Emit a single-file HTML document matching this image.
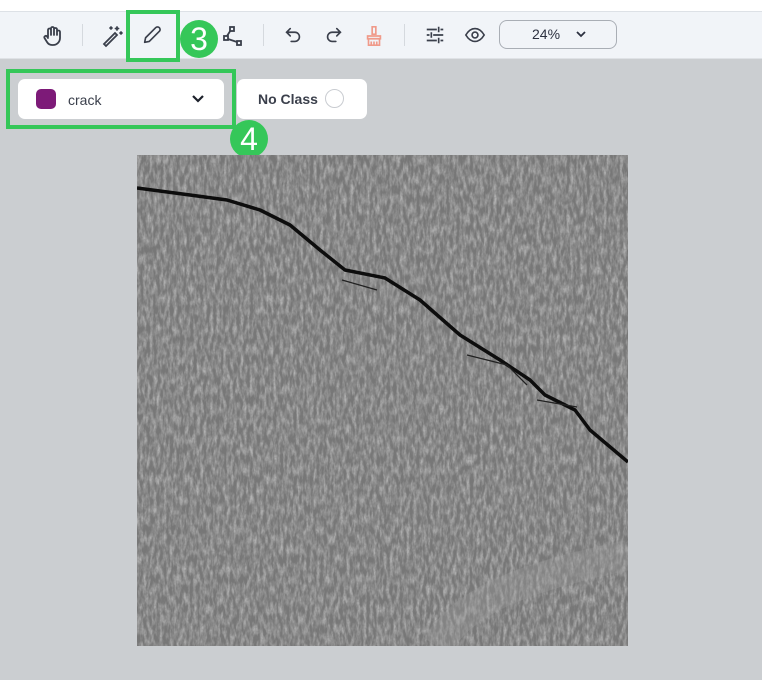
<!DOCTYPE html>
<html><head><style>
body{margin:0;width:762px;height:680px;background:#cbced1;font-family:"Liberation Sans",sans-serif;position:relative;overflow:hidden}
.top{position:absolute;left:0;top:0;width:762px;height:11px;background:#fff;border-bottom:1px solid #dde1e6}
.tb{position:absolute;left:0;top:12px;width:762px;height:46px;background:#f1f4f8;border-bottom:1px solid #dfe2e6}
.ab{position:absolute}
.sep{position:absolute;top:24px;width:1px;height:22px;background:#d5d9de}
.g{position:absolute;border:4px solid #35c759;box-sizing:border-box}
.num{position:absolute;width:36px;height:36px;border-radius:50%;background:#35c759;color:#fff;font-size:32px;line-height:36px;text-align:center}
.card{position:absolute;background:#fff;border-radius:7px}
</style></head><body>
<div class="top"></div>
<div class="tb"></div>
<svg class="ab" style="left:40px;top:24px" width="24" height="24" viewBox="0 0 24 24" fill="none" stroke="#3a3f4b" stroke-width="1.8" stroke-linecap="round" stroke-linejoin="round"><path d="M8 13V6a1.5 1.5 0 0 1 3 0v5M11 11V4.5a1.5 1.5 0 0 1 3 0V11M14 11V5.5a1.5 1.5 0 0 1 3 0V11M17 11V8a1.5 1.5 0 0 1 3 0v6a7 7 0 0 1-7 7h-1a6 6 0 0 1-5-3l-2.5-4a1.5 1.5 0 0 1 2.5-1.6L8 14"/></svg>
<div class="sep" style="left:82px"></div>
<svg class="ab" style="left:100px;top:24px" width="24" height="24" viewBox="0 0 24 24" fill="none" stroke="#3a3f4b" stroke-width="1.8" stroke-linecap="round"><path d="M4 20L15 9l2 2L6 22z"/><path d="M17 3v3M15.5 4.5h3M21 8v2M20 9h2M11 3v2M10 4h2"/></svg>
<svg class="ab" style="left:141px;top:24px" width="22" height="22" viewBox="0 0 24 24" fill="none" stroke="#3a3f4b" stroke-width="1.8" stroke-linejoin="round"><path d="M4 20l1-5L16 4a2.5 2.5 0 0 1 4 4L9 19z"/></svg>
<svg class="ab" style="left:221px;top:24px" width="24" height="24" viewBox="0 0 24 24" fill="none" stroke="#3a3f4b" stroke-width="1.8"><rect x="9" y="3" width="4" height="4"/><rect x="3" y="12" width="4" height="4"/><rect x="16" y="17" width="4" height="4"/><path d="M9.5 6.5L6 12M7 15l9 3"/></svg>
<div class="sep" style="left:263px"></div>
<svg class="ab" style="left:282px;top:24px" width="22" height="22" viewBox="0 0 24 24" fill="none" stroke="#3a3f4b" stroke-width="1.8" stroke-linecap="round"><path d="M9 5L5 9l4 4M5 9h9a5 5 0 0 1 0 10h-4"/></svg>
<svg class="ab" style="left:323px;top:24px" width="22" height="22" viewBox="0 0 24 24" fill="none" stroke="#3a3f4b" stroke-width="1.8" stroke-linecap="round"><path d="M15 5l4 4-4 4M19 9h-9a5 5 0 0 0 0 10h4"/></svg>
<svg class="ab" style="left:363px;top:24px" width="22" height="24" viewBox="0 0 24 24" fill="none" stroke="#f09a8a" stroke-width="1.8"><path d="M10 2h4v8h-4zM5 12h14v3H5zM6 15v7h12v-7M9 18v4M12 18v4M15 18v4"/></svg>
<div class="sep" style="left:404px"></div>
<svg class="ab" style="left:424px;top:24px" width="22" height="22" viewBox="0 0 24 24" fill="none" stroke="#3a3f4b" stroke-width="1.8"><path d="M3 6h11M18 6h3M16 3v6M3 12h3M10 12h11M8 9v6M3 18h11M18 18h3M16 15v6"/></svg>
<svg class="ab" style="left:463px;top:24px" width="24" height="22" viewBox="0 0 24 24" fill="none" stroke="#3a3f4b" stroke-width="1.8"><path d="M2 12c3-5 6-7 10-7s7 2 10 7c-3 5-6 7-10 7s-7-2-10-7z"/><circle cx="12" cy="12" r="3.2"/></svg>
<div class="ab" style="left:499px;top:20px;width:118px;height:29px;border:1px solid #a9aeb5;border-radius:8px;box-sizing:border-box;font-size:14px;color:#2c3140;line-height:27px;padding-left:32px">24%<svg style="position:absolute;left:76px;top:10px" width="10" height="7" viewBox="0 0 10 7"><path d="M1 1l4 4 4-4" fill="none" stroke="#2c3140" stroke-width="1.8"/></svg></div>
<div class="g" style="left:126px;top:10px;width:54px;height:52px"></div>
<div class="num" style="left:180px;top:20px;width:38px;height:38px;line-height:38px">3</div>
<div class="card" style="left:18px;top:79px;width:206px;height:40px"></div>
<div class="ab" style="left:36px;top:89px;width:20px;height:20px;border-radius:5px;background:#7d1a78"></div>
<div class="ab" style="left:68px;top:92px;font-size:14px;color:#3a3f4b">crack</div>
<svg class="ab" style="left:192px;top:95px" width="12" height="8" viewBox="0 0 12 8"><path d="M1 1l5 5 5-5" fill="none" stroke="#1d212b" stroke-width="2.2"/></svg>
<div class="card" style="left:237px;top:79px;width:130px;height:40px"></div>
<div class="ab" style="left:258px;top:91px;font-size:14px;color:#3a3f4b;font-weight:bold">No Class</div>
<div class="ab" style="left:325px;top:89px;width:19px;height:19px;border-radius:50%;border:1px solid #c9ccd1;box-sizing:border-box"></div>
<div class="g" style="left:6px;top:69px;width:230px;height:60px"></div>
<div class="num" style="left:230px;top:120px;width:38px;height:38px;line-height:38px">4</div>
<svg class="ab" style="left:137px;top:155px" width="491" height="491" viewBox="0 0 491 491">
<filter id="n"><feTurbulence type="fractalNoise" baseFrequency="0.3 0.1" numOctaves="3" seed="4"/><feColorMatrix type="matrix" values="0 0 0 0 0.6 0 0 0 0 0.6 0 0 0 0 0.6 0 0 0 -2 1.3"/></filter>
<filter id="d"><feTurbulence type="fractalNoise" baseFrequency="0.5" numOctaves="2" seed="9"/><feColorMatrix type="matrix" values="0 0 0 0 0.2 0 0 0 0 0.2 0 0 0 0 0.2 0 0 0 -2.5 1.3"/></filter>
<rect width="491" height="491" fill="#777"/>
<rect width="491" height="491" filter="url(#n)" opacity="0.7"/>
<rect width="491" height="491" filter="url(#d)" opacity="0.5"/>
<path d="M300 491C330 440 400 420 491 400" stroke="#a0a0a0" stroke-width="30" opacity="0.3" fill="none"/>
<path d="M0 33L53 40 90 45 123 55 153 70 183 95 208 115 248 123 283 145 323 180 363 205 393 225 408 240 438 255 453 275 491 307" stroke="#0d0d0d" stroke-width="3.5" fill="none" stroke-linejoin="round"/>
<path d="M205 125l35 10M330 200l40 10 20 20M400 245l40 7" stroke="#222" stroke-width="1.3" fill="none"/>
</svg>
</body></html>
